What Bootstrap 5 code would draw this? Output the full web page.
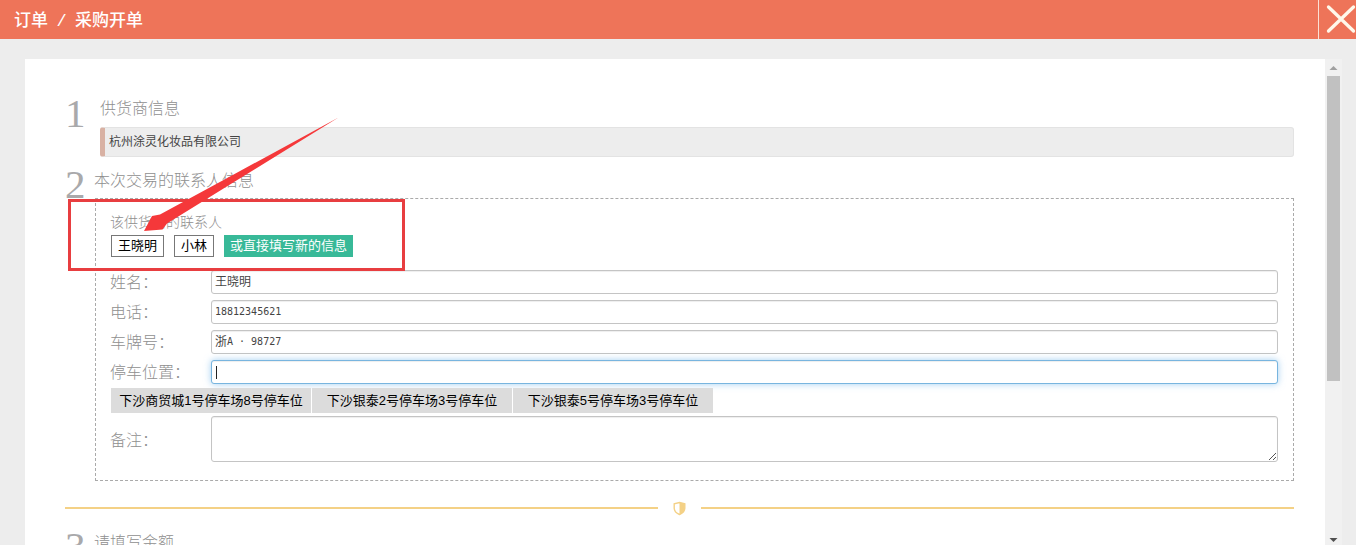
<!DOCTYPE html>
<html lang="zh-CN">
<head>
<meta charset="utf-8">
<meta name="viewport" content="width=device-width, initial-scale=1">
<title>采购开单</title>
<link href="https://cdn.jsdelivr.net/npm/bootstrap@5.3.0/dist/css/bootstrap.min.css" rel="stylesheet">
<style>
body{height:545px;background:#ededed;font-family:"Liberation Sans","Noto Sans CJK SC",sans-serif;color:#333}
.topbar{height:39px;background:#ee7459;color:#fff;flex:none}
.crumb{font-size:17px;font-weight:500;padding-left:14px;line-height:37px;font-family:"Noto Sans CJK SC",sans-serif;white-space:nowrap}
.crumb-sep{display:inline-block;width:27px;text-align:center;font-family:"Liberation Mono",monospace;font-weight:400}
.close-box{width:38px;border-left:1px solid #fbe0d5}
.stage{margin:20px 14px 0 25px;min-height:0}
.panel{padding:0 31px 0 40px}
.num{font-family:"Liberation Serif",serif;font-size:41px;line-height:30px;color:#a9a9ab;height:30px}
.title{font-size:16px;line-height:20px;height:20px;font-weight:300;color:#8f8f8f;font-family:"Noto Sans CJK SC",sans-serif}
.step-one{padding-top:38px;height:110px}
.step-one .num{width:35px;margin-top:1px}
.step-two .num,.step-three .num{width:30px}
.supplier{height:30px;margin-top:10px;border:1px solid #e3e3e3;border-left:5px solid #d8b1a3;border-radius:3px;background:#ededed;font-size:12px;line-height:29px;padding-left:4px;color:#444}
.contact-box{border:1px dashed #aaa;height:283px;margin-top:9px;padding:13px 15px 0}
.step-two .title,.step-three .title{margin-left:-1px}
.sub{font-size:14px;line-height:20px;height:20px;font-weight:300;color:#8f8f8f;margin-left:-1px}
.pick{height:22px;font-size:13px;line-height:20px;padding:0 6px;border:1px solid #777;border-radius:0;color:#000;background:#fff;margin-top:3px}
.pick-new{background:#38b998;border-color:#38b998;color:#fff;padding:0 5px}
.fields{margin-top:13px}
.line{height:24px;margin-bottom:6px}
.line label{width:101px;margin-left:-1px;flex:none;font-size:16px;line-height:22px;font-weight:300;color:#8f8f8f;font-family:"Noto Sans CJK SC",sans-serif}
.entry.form-control{height:24px;min-height:0;padding:0 3px;border:1px solid #c4c4c4;border-radius:3px;font-size:12px;line-height:22px;color:#444;box-shadow:inset 0 1px 1px rgba(0,0,0,.07)}
.entry .digits{display:inline-block;vertical-align:top;line-height:21px;font-family:"DejaVu Sans Mono","Noto Sans CJK SC",monospace;font-size:10px}
.entry.active-entry{border-color:#78b5df;box-shadow:inset 0 1px 1px rgba(0,0,0,.07),0 0 7px rgba(102,175,233,.6)}
.caret-bar{display:inline-block;width:1px;height:13px;background:#222;margin:5px 0 0 1px;vertical-align:top}
.spots{gap:1px;margin-top:-2px}
.spot{width:200px;height:25px;background:#dcdcdc;color:#000;font-size:13px;line-height:26px;text-align:center}
.note{height:46px;margin-top:3px}
textarea.entry.form-control{height:46px;resize:none}
.grip{position:absolute;right:1px;bottom:1px}
.rule{height:2px;background:#f4d186}
.divider{height:20px;margin-top:17px}
.divider svg{margin:0 14px}
.step-three{margin-top:13px}
.scroll{width:17px;background:#f1f1f1;flex:none}
.thumb{width:13px;height:305px;background:#c1c1c1;margin:0 2px}
.annotation{position:absolute;left:0;top:0;pointer-events:none}
</style>
</head>
<body class="d-flex flex-column overflow-hidden position-relative">
<header class="topbar d-flex justify-content-between">
  <div class="crumb">订单<span class="crumb-sep">/</span>采购开单</div>
  <div class="close-box"><svg class="d-block" width="37" height="39"><path d="M9.500 7 34.500 31M34.500 7 9.500 31" stroke="#fff8ea" stroke-width="3.300" stroke-linecap="round"/></svg></div>
</header>
<main class="stage d-flex flex-grow-1">
  <div class="panel bg-white flex-grow-1 overflow-hidden">
    <section class="step-one d-flex">
      <div class="num">1</div>
      <div class="flex-grow-1"><div class="title">供货商信息</div><div class="supplier">杭州涂灵化妆品有限公司</div></div>
    </section>
    <section class="step-two d-flex">
      <div class="num">2</div>
      <div class="flex-grow-1">
        <div class="title">本次交易的联系人信息</div>
        <div class="contact-box">
          <div class="sub">该供货商的联系人</div>
          <div class="d-flex" style="gap:10px"><button class="pick">王晓明</button><button class="pick">小林</button><button class="pick pick-new">或直接填写新的信息</button></div>
          <div class="fields">
            <div class="line d-flex"><label>姓名：</label><div class="entry form-control">王晓明</div></div>
            <div class="line d-flex"><label>电话：</label><div class="entry form-control"><span class="digits">18812345621</span></div></div>
            <div class="line d-flex"><label>车牌号：</label><div class="entry form-control">浙<span class="digits">A&nbsp;·&nbsp;98727</span></div></div>
            <div class="line d-flex"><label>停车位置：</label><div class="entry form-control active-entry"><span class="caret-bar"></span></div></div>
          </div>
          <div class="spots d-flex"><div class="spot">下沙商贸城1号停车场8号停车位</div><div class="spot">下沙银泰2号停车场3号停车位</div><div class="spot">下沙银泰5号停车场3号停车位</div></div>
          <div class="line note d-flex align-items-center"><label>备注：</label>
            <div class="position-relative flex-grow-1"><textarea class="entry form-control d-block"></textarea><svg class="grip" width="9" height="9"><path d="M1 8 8 1M5 8 8 5" stroke="#555" stroke-width="1"/></svg></div>
          </div>
        </div>
      </div>
    </section>
    <div class="divider d-flex align-items-center">
      <div class="rule flex-grow-1"></div>
      <svg width="15" height="15" viewBox="0 0 15 15"><path d="M7.500 1.500 12.800 2.800V7C12.800 10 10.500 12.300 7.500 13.500 4.500 12.300 2.200 10 2.200 7V2.800Z" fill="#fff" stroke="#f4d186" stroke-width="1.400"/><path d="M7.500 1.500 12.800 2.800V7C12.800 10 10.500 12.300 7.500 13.500Z" fill="#f4d186"/></svg>
      <div class="rule flex-grow-1"></div>
    </div>
    <section class="step-three d-flex"><div class="num">3</div><div class="title">请填写金额</div></section>
  </div>
  <div class="scroll d-flex flex-column">
    <svg class="d-block flex-shrink-0" width="17" height="17"><path d="M4.500 11 8.500 7 12.500 11Z" fill="#a0a0a0"/></svg>
    <div class="thumb"></div>
    <svg class="d-block mt-auto" width="17" height="14"><path d="M4.500 7 8.500 11 12.500 7Z" fill="#505050"/></svg>
  </div>
</main>
<svg class="annotation" width="420" height="280"><rect x="69.500" y="200.500" width="334" height="69" fill="none" stroke="#e83e40" stroke-width="3"/><path d="M338.500 117.500 230 176.500 160 214.500 152 216 144 231 162.500 229.500 167 223.500 230 184.500Z" fill="#f5383a"/></svg>
</body>
</html>
